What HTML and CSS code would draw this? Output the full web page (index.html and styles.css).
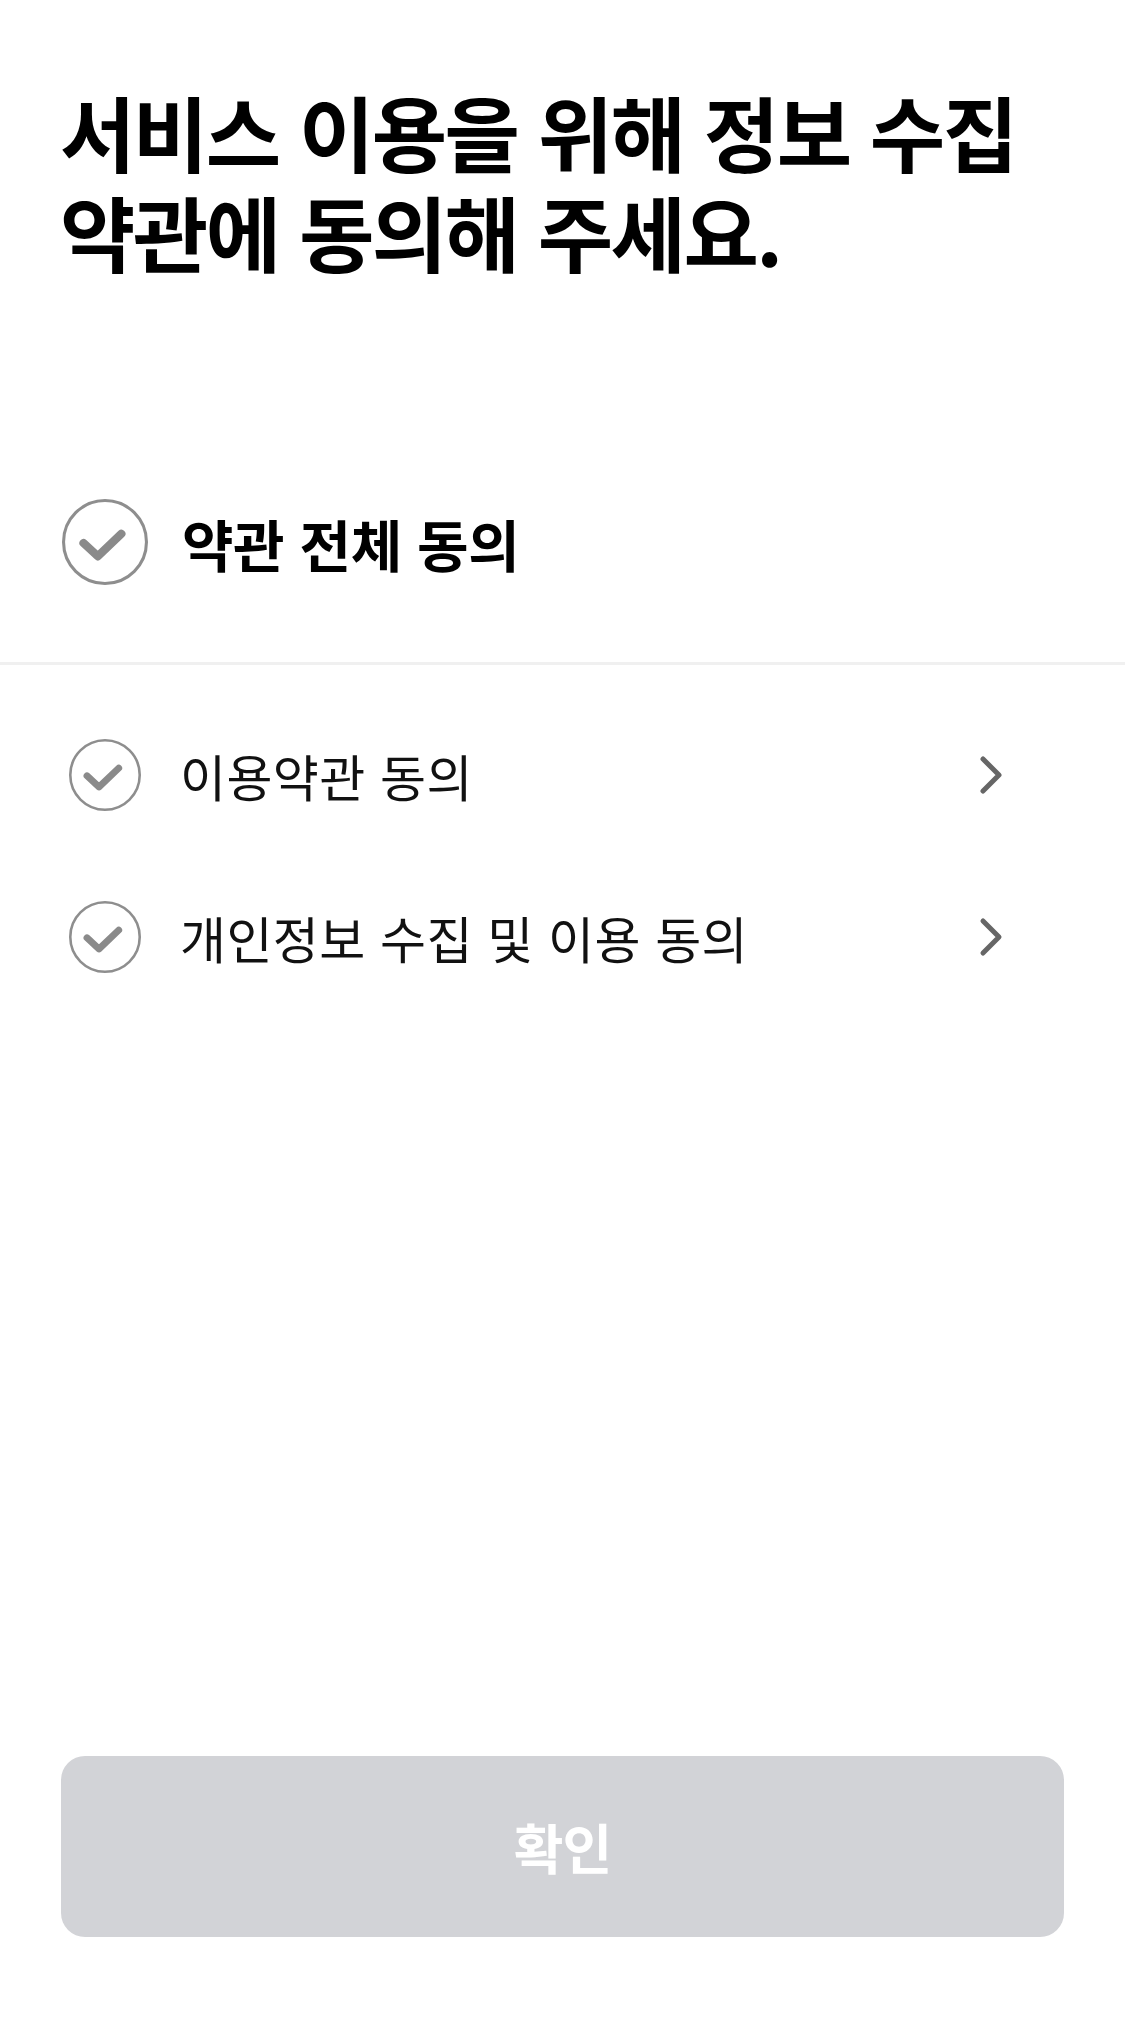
FILE: index.html
```html
<!DOCTYPE html>
<html lang="ko">
<head>
<meta charset="utf-8">
<title>약관 동의</title>
<link rel="stylesheet" href="styles.css">
</head>
<body>
<div class="page">
  <h1 class="title">서비스 이용을 위해 정보 수집<br>약관에 동의해 주세요.</h1>

  <div class="all-row">
    <span class="check check-lg">
      <svg viewBox="0 0 84 84" width="86" height="86">
        <circle cx="42" cy="42" r="40.5" class="ring"/>
        <polyline points="21,43 35,56 58,34" class="tick"/>
      </svg>
    </span>
    <span class="all-label">약관 전체 동의</span>
  </div>

  <div class="divider"></div>

  <ul class="terms">
    <li class="term">
      <span class="check">
        <svg viewBox="0 0 84 84" width="72" height="72">
          <circle cx="42" cy="42" r="40.5" class="ring"/>
          <polyline points="21,43 35,56 58,34" class="tick"/>
        </svg>
      </span>
      <span class="term-label">이용약관 동의</span>
      <svg class="chev" viewBox="0 0 24 40" width="24" height="40">
        <polyline points="4,4 20,20 4,36"/>
      </svg>
    </li>
    <li class="term">
      <span class="check">
        <svg viewBox="0 0 84 84" width="72" height="72">
          <circle cx="42" cy="42" r="40.5" class="ring"/>
          <polyline points="21,43 35,56 58,34" class="tick"/>
        </svg>
      </span>
      <span class="term-label">개인정보 수집 및 이용 동의</span>
      <svg class="chev" viewBox="0 0 24 40" width="24" height="40">
        <polyline points="4,4 20,20 4,36"/>
      </svg>
    </li>
  </ul>

  <div class="footer">
    <button class="confirm" type="button" disabled>확인</button>
  </div>
</div>
</body>
</html>
```

FILE: styles.css
```css
* { box-sizing: border-box; }

html, body {
  margin: 0;
  padding: 0;
  background: #ffffff;
}

body {
  font-family: "Noto Sans CJK KR", "Noto Sans", sans-serif;
  color: #111111;
}

.page {
  min-height: 2036px;
  display: flex;
  flex-direction: column;
}

.title {
  margin: 81px 0 0;
  padding: 0 30px 0 60px;
  font-size: 82px;
  line-height: 100px;
  font-weight: 700;
  letter-spacing: -2.6px;
  color: #000000;
}

.all-row {
  display: flex;
  align-items: center;
  gap: 34px;
  padding: 0 62px;
  margin-top: 218px;
  height: 86px;
}

.check {
  width: 86px;
  height: 86px;
  display: flex;
  align-items: center;
  justify-content: center;
  flex: none;
}

.check svg { display: block; }

.ring {
  fill: none;
  stroke: #8e8e8e;
  stroke-width: 3;
}

.tick {
  fill: none;
  stroke: #8a8a8a;
  stroke-width: 8;
  stroke-linecap: round;
  stroke-linejoin: round;
}

.all-label {
  font-size: 56px;
  font-weight: 700;
  letter-spacing: -0.4px;
  color: #000000;
}

.divider {
  margin-top: 77px;
  height: 3px;
  background: #f0f0f0;
}

.terms {
  list-style: none;
  margin: 67px 0 0;
  padding: 0;
  display: flex;
  flex-direction: column;
  gap: 76px;
}

.term {
  display: flex;
  align-items: center;
  gap: 32px;
  padding: 0 122px 0 62px;
  height: 86px;
}

.term-label {
  flex: 1;
  font-size: 50px;
  font-weight: 400;
  letter-spacing: 0.4px;
  color: #111111;
}

.chev {
  flex: none;
  display: block;
}

.chev polyline {
  fill: none;
  stroke: #666666;
  stroke-width: 5;
  stroke-linecap: round;
  stroke-linejoin: round;
}

.footer {
  margin-top: auto;
  padding: 0 61px 99px;
}

.confirm {
  display: block;
  width: 100%;
  height: 181px;
  border: none;
  border-radius: 24px;
  background: #d2d3d7;
  color: #ffffff;
  font-family: "Noto Sans CJK KR", "Noto Sans", sans-serif;
  font-size: 54px;
  font-weight: 700;
  letter-spacing: -1px;
  padding: 0;
}
```
